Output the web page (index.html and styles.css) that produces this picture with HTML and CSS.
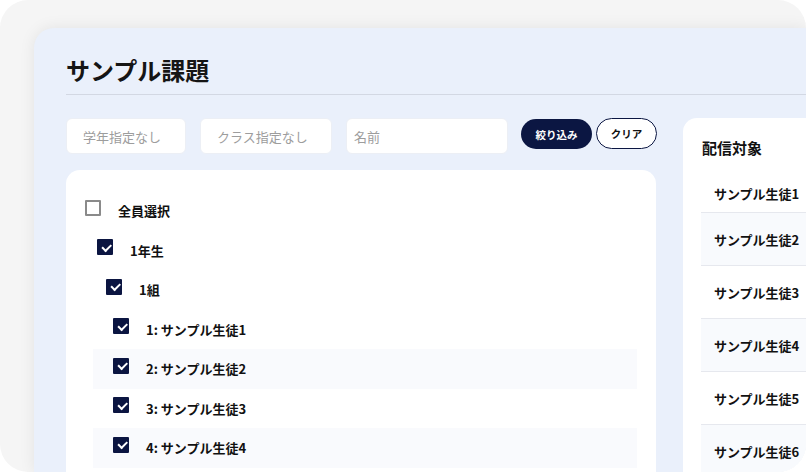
FILE: index.html
```html
<!DOCTYPE html>
<html lang="ja">
<head>
    <meta charset="UTF-8">
    <meta name="viewport" content="width=device-width, initial-scale=1.0">
    <title>サンプル課題</title>
    <link rel="stylesheet" href="styles.css">
</head>
<body>
    <div class="frame">
        <div class="panel">
            <h1 class="title">サンプル課題</h1>
            <div class="content">
                <div class="main">
                    <div class="filters">
                        <input type="text" class="field field-grade" placeholder="学年指定なし">
                        <input type="text" class="field field-class" placeholder="クラス指定なし">
                        <input type="text" class="field field-name" placeholder="名前">
                        <button class="btn btn-primary">絞り込み</button>
                        <button class="btn btn-outline">クリア</button>
                    </div>
                    <div class="tree">
                        <div class="tree-row level-0"><span class="check"></span><span>全員選択</span></div>
                        <div class="tree-row level-1"><span class="check checked"></span><span>1年生</span></div>
                        <div class="tree-row level-2"><span class="check checked"></span><span>1組</span></div>
                        <ul class="students">
                            <li class="tree-row student"><span class="check checked"></span><span>1: サンプル生徒1</span></li>
                            <li class="tree-row student"><span class="check checked"></span><span>2: サンプル生徒2</span></li>
                            <li class="tree-row student"><span class="check checked"></span><span>3: サンプル生徒3</span></li>
                            <li class="tree-row student"><span class="check checked"></span><span>4: サンプル生徒4</span></li>
                        </ul>
                    </div>
                </div>
                <div class="targets">
                    <h2 class="targets-title">配信対象</h2>
                    <ul class="target-list">
                        <li class="target-item">サンプル生徒1</li>
                        <li class="target-item">サンプル生徒2</li>
                        <li class="target-item">サンプル生徒3</li>
                        <li class="target-item">サンプル生徒4</li>
                        <li class="target-item">サンプル生徒5</li>
                        <li class="target-item">サンプル生徒6</li>
                    </ul>
                </div>
            </div>
        </div>
    </div>
</body>
</html>
```

FILE: styles.css
```css
* {
    margin: 0;
    padding: 0;
    box-sizing: border-box;
}
body {
    background: #fff;
    font-family: "Noto Sans CJK JP", "Noto Sans", sans-serif;
    color: #111;
}
.frame {
    width: 806px;
    height: 472px;
    background: #f5f5f5;
    border-radius: 28px;
    padding: 28px 0 0 34px;
    overflow: hidden;
}
.panel {
    height: 100%;
    background: #eaf0fb;
    border-radius: 20px 0 0 0;
    box-shadow: 0 0 16px rgba(0, 0, 0, 0.08);
    padding-left: 32px;
    overflow: hidden;
}
.title {
    font-size: 24px;
    font-weight: 700;
    line-height: 34px;
    padding: 25px 0 7px;
    border-bottom: 1px solid #d3d8e3;
    color: #151515;
}
.content {
    display: flex;
    gap: 26px;
    margin-top: 23px;
    width: 900px;
}
.main {
    width: 591px;
    flex-shrink: 0;
}
.filters {
    display: flex;
    align-items: flex-start;
    height: 36px;
}
.field {
    height: 36px;
    background: #fff;
    border: 1px solid #eceff5;
    border-radius: 6px;
    padding: 0 16px;
    font-family: inherit;
    font-size: 13px;
    color: #333;
    outline: none;
    margin-right: 14px;
}
.field::placeholder {
    color: #9d9d9d;
}
.field-grade {
    width: 120px;
}
.field-class {
    width: 132px;
}
.field-name {
    width: 162px;
    padding-left: 7px;
    margin-right: 13px;
}
.btn {
    font-family: inherit;
    font-weight: 700;
    border-radius: 16px;
    cursor: pointer;
    margin-top: 1px;
}
.btn-primary {
    width: 71px;
    height: 30px;
    background: #0b1642;
    color: #fff;
    border: none;
    font-size: 10.5px;
    margin-right: 4px;
}
.btn-outline {
    width: 61px;
    height: 31px;
    margin-top: 0;
    background: #fff;
    color: #111;
    border: 1.5px solid #0b1642;
    font-size: 10.5px;
}
.tree {
    margin-top: 16px;
    width: 590px;
    height: 340px;
    background: #fff;
    border-radius: 14px;
    padding: 21px 19px 0;
}
.tree-row {
    display: flex;
    align-items: center;
    height: 39.5px;
    font-size: 13px;
    font-weight: 700;
    list-style: none;
}
.check {
    width: 16px;
    height: 16px;
    margin-right: 17px;
    margin-bottom: 6px;
    border: 2px solid #8a8a8a;
    border-radius: 1px;
    flex-shrink: 0;
    position: relative;
}
.check.checked {
    background: #0b1541;
    border-color: #0b1541;
}
.check.checked::after {
    content: "";
    position: absolute;
    left: 3px;
    top: 2.5px;
    width: 7px;
    height: 3.5px;
    border-left: 2px solid #fff;
    border-bottom: 2px solid #fff;
    transform: rotate(-45deg);
}
.level-1 {
    padding-left: 12px;
}
.level-2 {
    padding-left: 21px;
}
.students {
    margin-left: 8px;
}
.student {
    padding-left: 20px;
}
.student:nth-child(even) {
    background: #f9fafd;
}
.targets {
    width: 200px;
    height: 400px;
    background: #fff;
    border-radius: 14px;
    flex-shrink: 0;
    padding-left: 18px;
}
.targets-title {
    font-size: 15px;
    font-weight: 700;
    line-height: 22px;
    padding: 19px 0 15px 1px;
}
.target-list {
    list-style: none;
}
.target-item {
    display: flex;
    align-items: center;
    height: 53px;
    padding-left: 13px;
    border-top: 1px solid #e6e8ee;
    font-size: 13px;
    font-weight: 700;
}
.target-item:first-child {
    height: 38px;
    border-top: none;
}
.target-item:nth-child(even) {
    background: #f8fafd;
}
```
